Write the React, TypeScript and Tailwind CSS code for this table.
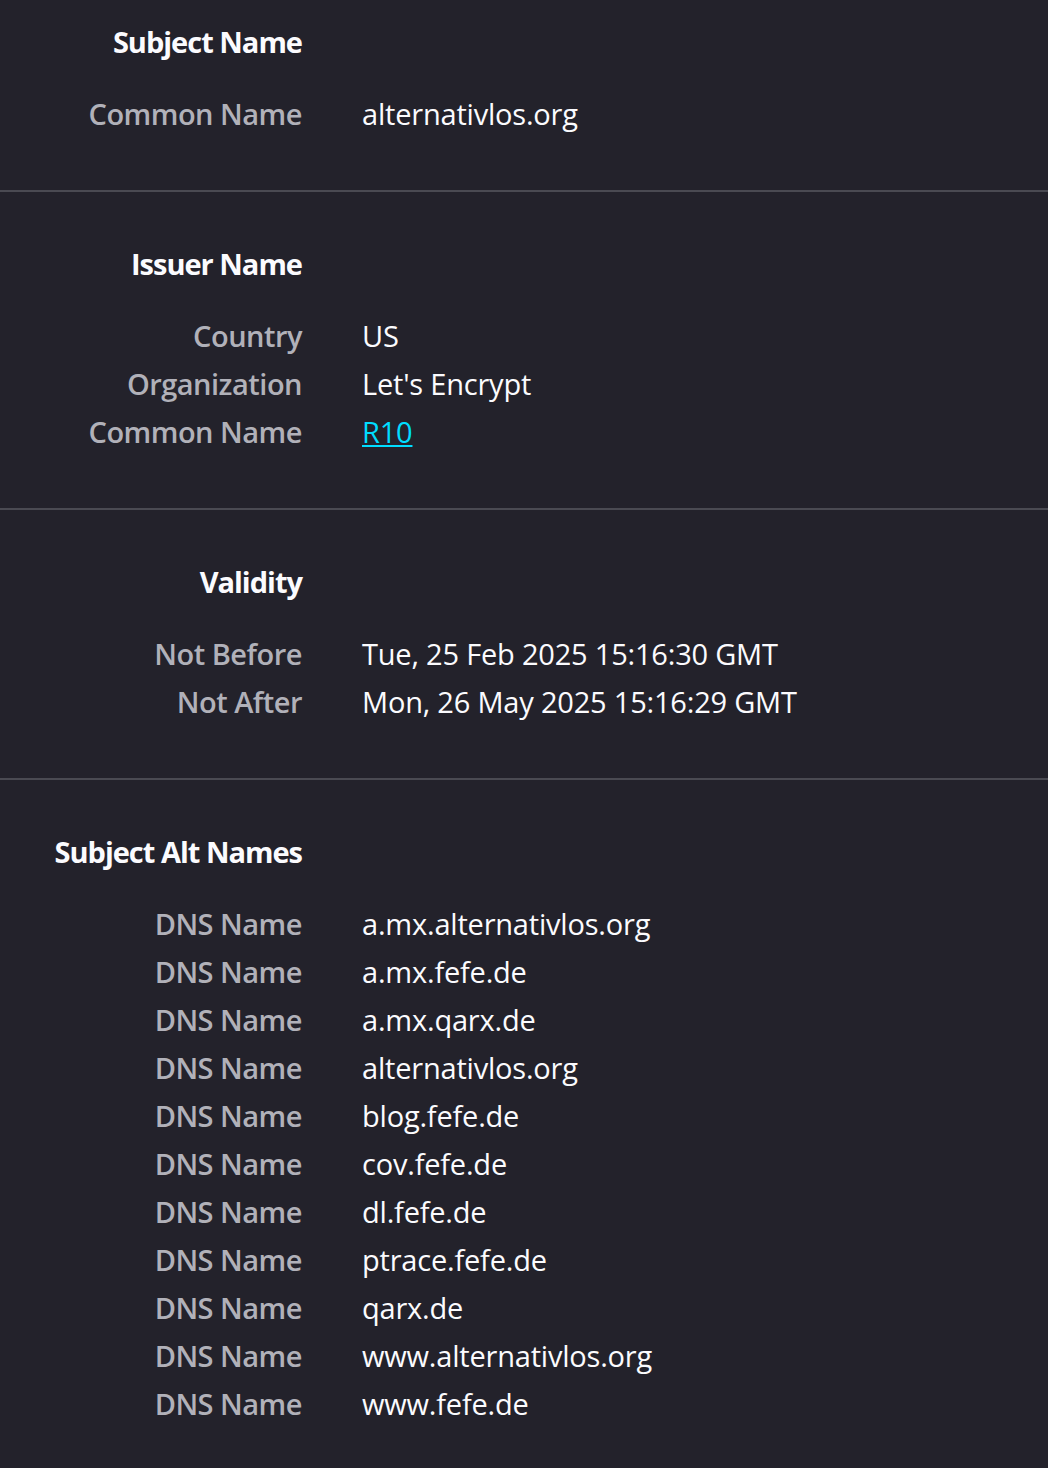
const sections = [
  {
    title: 'Subject Name',
    first: true,
    rows: [{ label: 'Common Name', value: 'alternativlos.org' }],
  },
  {
    title: 'Issuer Name',
    rows: [
      { label: 'Country', value: 'US' },
      { label: 'Organization', value: "Let's Encrypt" },
      { label: 'Common Name', value: 'R10', link: true },
    ],
  },
  {
    title: 'Validity',
    rows: [
      { label: 'Not Before', value: 'Tue, 25 Feb 2025 15:16:30 GMT' },
      { label: 'Not After', value: 'Mon, 26 May 2025 15:16:29 GMT' },
    ],
  },
  {
    title: 'Subject Alt Names',
    last: true,
    rows: [
      'a.mx.alternativlos.org',
      'a.mx.fefe.de',
      'a.mx.qarx.de',
      'alternativlos.org',
      'blog.fefe.de',
      'cov.fefe.de',
      'dl.fefe.de',
      'ptrace.fefe.de',
      'qarx.de',
      'www.alternativlos.org',
      'www.fefe.de',
    ].map((v) => ({ label: 'DNS Name', value: v })),
  },
];

type Row = { label: string; value: string; link?: boolean };

const InfoRow = ({ row }: { row: Row }) => (
  <div className="grid grid-cols-[302px_1fr] gap-x-[60px] h-12 items-center">
    <span className="text-right font-semibold tracking-[-0.5px] text-[#b1b1b9]">{row.label}</span>
    {row.link ? (
      <a className="text-[#00ddff] underline underline-offset-2">{row.value}</a>
    ) : (
      <span className="text-[#fbfbfe]">{row.value}</span>
    )}
  </div>
);

export default function App() {
  return (
    <div
      className="min-h-[1468px] w-[1048px] bg-[#23222b] text-[29px] leading-[48px] tracking-[-0.2px]"
      style={{ fontFamily: '"Open Sans", "Noto Sans", sans-serif' }}
    >
      {sections.map((s) => (
        <section
          key={s.title}
          className={`${s.first ? 'pt-[18px]' : 'pt-[48px]'} ${s.last ? 'pb-[40px]' : 'pb-[52px] border-b-2 border-[#4a4a52]'}`}
        >
          <div className="grid grid-cols-[302px_1fr] gap-x-[60px] h-12 items-center mb-6">
            <h2 className="text-right font-bold tracking-[-1px] text-[#fbfbfe]">{s.title}</h2>
          </div>
          {s.rows.map((r, i) => (
            <InfoRow key={i} row={r} />
          ))}
        </section>
      ))}
    </div>
  );
}
